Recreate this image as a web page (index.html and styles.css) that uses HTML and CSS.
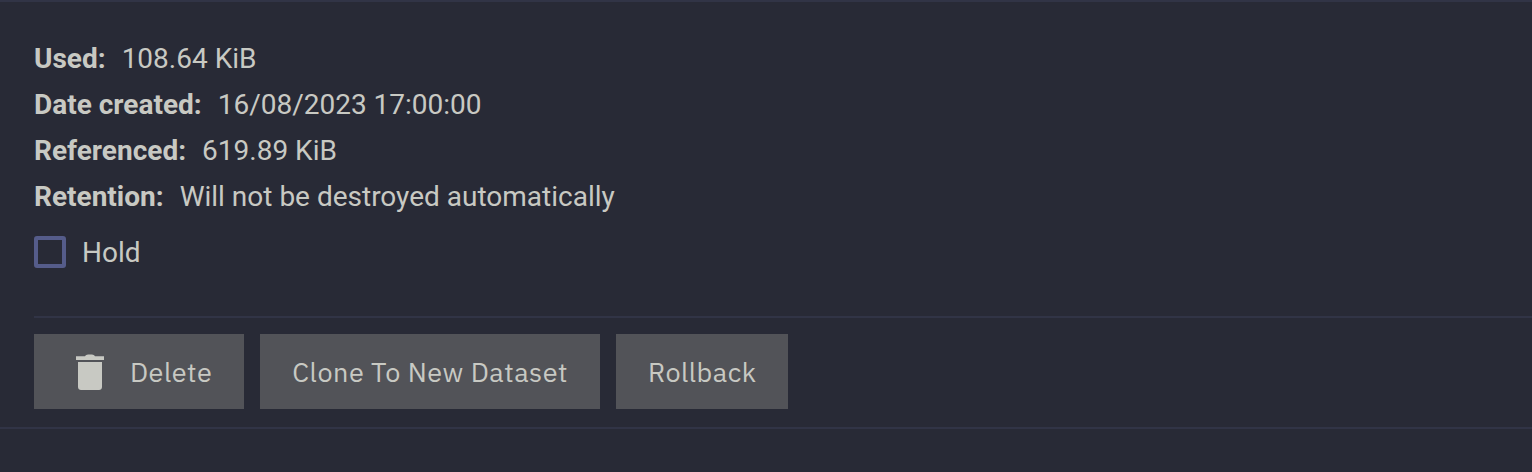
FILE: index.html
```html
<!DOCTYPE html>
<html lang="en">
<head>
<meta charset="utf-8">
<title>Snapshot details</title>
<link rel="stylesheet" href="styles.css">
</head>
<body>
<section class="panel">
  <div class="details">
    <div class="row"><strong class="label">Used:</strong><span>108.64 KiB</span></div>
    <div class="row"><strong class="label">Date created:</strong><span>16/08/2023 17:00:00</span></div>
    <div class="row"><strong class="label">Referenced:</strong><span>619.89 KiB</span></div>
    <div class="row"><strong class="label">Retention:</strong><span>Will not be destroyed automatically</span></div>
    <label class="hold"><span class="checkbox"></span><span>Hold</span></label>
  </div>
  <div class="actions">
    <button class="btn btn-icon" type="button">
      <svg class="trash" viewBox="0 0 28 36" width="28" height="36" aria-hidden="true"><path d="M9 2.2C10 .8 11.500 .5 14 .5s4 .3 5 1.700h9V6H0V2.200z"/><path d="M2 8h24v25c0 1.700-1.300 3-3 3H5c-1.700 0-3-1.300-3-3z"/></svg>
      <span>Delete</span>
    </button>
    <button class="btn" type="button">Clone To New Dataset</button>
    <button class="btn" type="button">Rollback</button>
  </div>
</section>
</body>
</html>
```

FILE: styles.css
```css
* { box-sizing: border-box; }
html, body { margin: 0; height: 100%; }
body {
  background: #282a36;
  color: #c8c9c3;
  font-family: Roboto, "Liberation Sans", sans-serif;
  font-size: 28px;
  overflow: hidden;
}
.panel {
  border-top: 2px solid #313446;
  padding: 34px 0 0 34px;
}
.details { height: 280px; }
.row {
  display: flex;
  gap: 16px;
  height: 46px;
  line-height: 46px;
  white-space: nowrap;
}
.label { font-weight: 700; }
.hold {
  display: flex;
  align-items: center;
  gap: 16px;
  height: 32px;
  margin-top: 16px;
  color: #c8c9c3;
}
.checkbox {
  width: 32px;
  height: 32px;
  border: 4px solid #555c8a;
  border-radius: 3px;
}
.actions {
  display: flex;
  gap: 16px;
  height: 112px;
  padding-top: 16px;
  border-top: 2px solid #313446;
  position: relative;
}
.actions::after {
  content: "";
  position: absolute;
  left: -34px;
  right: 0;
  top: 109px;
  height: 2px;
  background: #313446;
}
.btn {
  display: flex;
  align-items: center;
  justify-content: center;
  height: 75px;
  padding: 0 32px;
  border: 0;
  background: #525358;
  color: #c8c9c3;
  font-family: "IBM Plex Sans", "Noto Sans", sans-serif;
  font-size: 27px;
  letter-spacing: 0.5px;
  white-space: nowrap;
}
.btn-icon { gap: 26px; padding: 0 32px 0 42px; }
.trash { fill: #c8c9c3; flex: none; }
```
